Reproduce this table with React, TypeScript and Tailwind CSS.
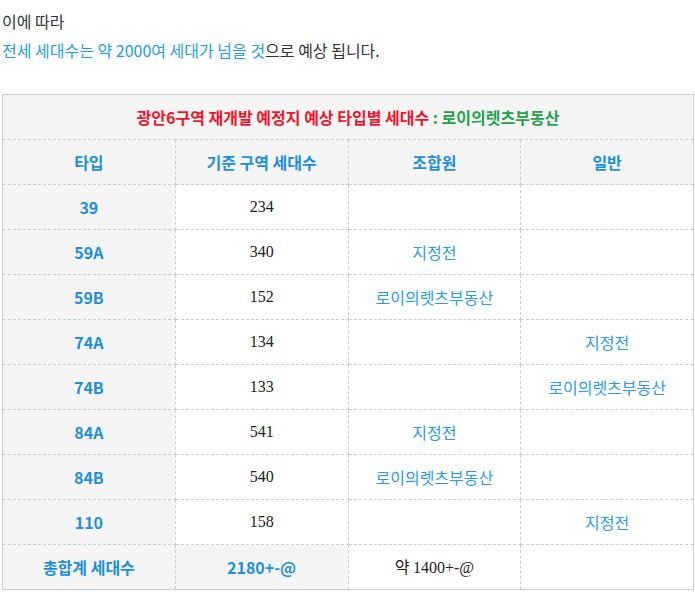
const rows: [string, string, string, string][] = [
  ['39', '234', '', ''],
  ['59A', '340', '지정전', ''],
  ['59B', '152', '로이의렛츠부동산', ''],
  ['74A', '134', '', '지정전'],
  ['74B', '133', '', '로이의렛츠부동산'],
  ['84A', '541', '지정전', ''],
  ['84B', '540', '로이의렛츠부동산', ''],
  ['110', '158', '', '지정전'],
]

const sans = "font-['Noto_Sans_CJK_KR','Noto_Sans',sans-serif]"
const serif = "font-['Liberation_Serif','Noto_Sans_CJK_KR',serif]"
const cell = 'h-[45px] border border-dashed border-[#cccccc] text-center align-middle text-[16px] p-0'

export default function App() {
  return (
    <div className={`bg-white w-[695px] h-[597px] ${sans}`}>
      <div className="pl-[2px] pt-[7px] text-[16px] leading-[29px] text-[#333333]">
        <p>이에 따라</p>
        <p>
          <span className="text-[#1e9bef]">전세 세대수는 약 2000여 세대가 넘을 것</span>으로 예상 됩니다.
        </p>
      </div>

      <table className="mt-[29px] ml-[2px] w-[692px] table-fixed border-collapse border border-solid border-[#cccccc]">
        <tbody>
          <tr>
            <td colSpan={4} className={`${cell} bg-[#f5f5f5] font-bold`}>
              <span className="text-[#f2142b]">광안6구역 재개발 예정지 예상 타입별 세대수</span>
              <span className="text-[#22a14b]"> : 로이의렛츠부동산</span>
            </td>
          </tr>
          <tr className="bg-[#f5f5f5] font-bold text-[#1e8fe0]">
            <td className={cell}>타입</td>
            <td className={cell}>기준 구역 세대수</td>
            <td className={cell}>조합원</td>
            <td className={cell}>일반</td>
          </tr>
          {rows.map(([t, n, a, b]) => (
            <tr key={t}>
              <td className={`${cell} bg-[#f5f5f5] font-bold text-[#1e8fe0]`}>{t}</td>
              <td className={`${cell} ${serif} text-[#222222]`}>{n}</td>
              <td className={`${cell} text-[#2a9af0]`}>{a}</td>
              <td className={`${cell} text-[#2a9af0]`}>{b}</td>
            </tr>
          ))}
          <tr>
            <td className={`${cell} bg-[#f5f5f5] font-bold text-[#1e8fe0]`}>총합계 세대수</td>
            <td className={`${cell} bg-[#f5f5f5] font-bold text-[#1e8fe0]`}>2180+-@</td>
            <td className={`${cell} text-[#222222]`}>
              약 <span className={serif}>1400+-@</span>
            </td>
            <td className={cell}></td>
          </tr>
        </tbody>
      </table>
    </div>
  )
}
